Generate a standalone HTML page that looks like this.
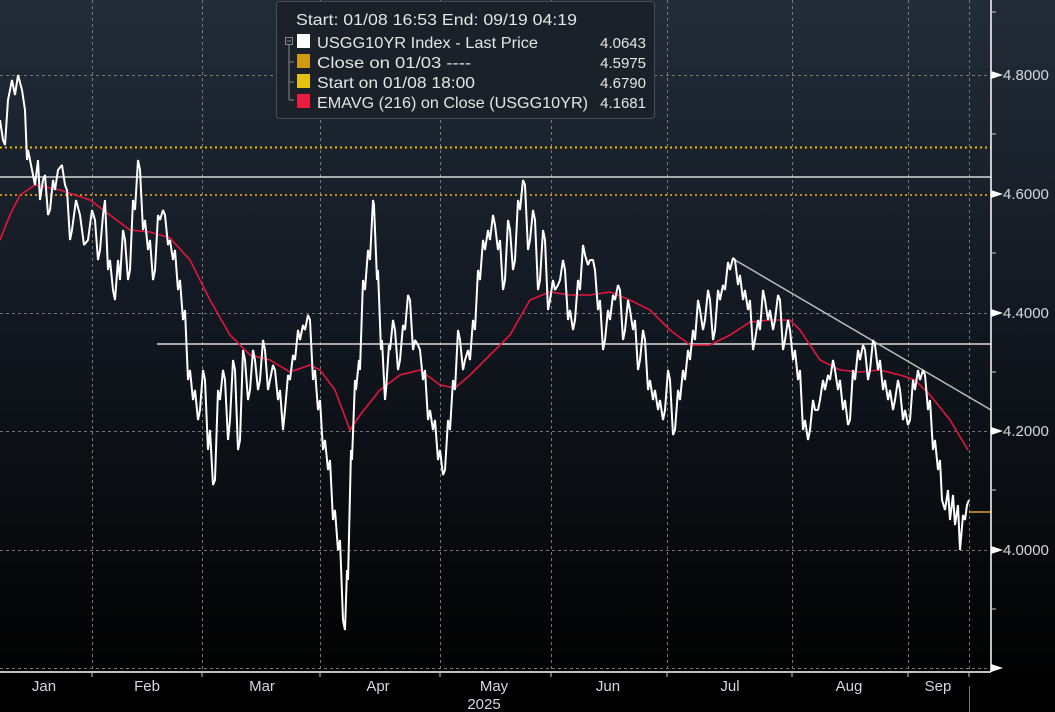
<!DOCTYPE html>
<html><head><meta charset="utf-8"><style>
html,body{margin:0;padding:0;background:#000;}
body{width:1055px;height:712px;overflow:hidden;font-family:"Liberation Sans",sans-serif;}
</style></head><body>
<svg width="1055" height="712" xmlns="http://www.w3.org/2000/svg" style="display:block">
<defs><linearGradient id="bg" x1="0" y1="0" x2="0" y2="1">
<stop offset="0" stop-color="#222c38"/><stop offset="0.45" stop-color="#121821"/><stop offset="0.85" stop-color="#050607"/><stop offset="1" stop-color="#000"/></linearGradient></defs>
<rect width="1055" height="712" fill="url(#bg)"/>
<rect y="672" width="1055" height="40" fill="#000"/>
<g stroke="#777" stroke-width="1" stroke-dasharray="3,3" fill="none">
<line x1="0" y1="75.5" x2="991" y2="75.5"/><line x1="0" y1="313.5" x2="991" y2="313.5"/>
<line x1="0" y1="431.5" x2="991" y2="431.5"/><line x1="0" y1="550.5" x2="991" y2="550.5"/><line x1="0" y1="668.5" x2="991" y2="668.5"/>
<line x1="92.5" y1="0" x2="92.5" y2="672"/><line x1="202.5" y1="0" x2="202.5" y2="672"/><line x1="320.5" y1="0" x2="320.5" y2="672"/>
<line x1="440.5" y1="0" x2="440.5" y2="672"/><line x1="551.5" y1="0" x2="551.5" y2="672"/><line x1="667.5" y1="0" x2="667.5" y2="672"/>
<line x1="792.5" y1="0" x2="792.5" y2="672"/><line x1="908.5" y1="0" x2="908.5" y2="672"/><line x1="969.5" y1="0" x2="969.5" y2="672"/>
</g>
<line x1="969.5" y1="686" x2="969.5" y2="712" stroke="#777"/>
<line x1="0" y1="147.5" x2="991" y2="147.5" stroke="#e8bc00" stroke-width="2" stroke-dasharray="2,3"/>
<line x1="0" y1="195" x2="991" y2="195" stroke="#c88d1c" stroke-width="2" stroke-dasharray="2,3"/>
<line x1="0" y1="177" x2="991" y2="177" stroke="#d8d8d8" stroke-width="1.5"/>
<line x1="157" y1="344" x2="991" y2="344" stroke="#d8d8d8" stroke-width="1.5"/>
<line x1="735" y1="260" x2="991" y2="410" stroke="#bbb" stroke-width="1.5"/>
<line x1="969" y1="512" x2="991" y2="512" stroke="#e0a020" stroke-width="1.5"/>
<polyline fill="none" stroke="#e4163a" stroke-width="1.6" points="0,240 10,215 20,195 35,185 60,190 90,200 110,215 130,230 150,232 170,238 190,260 210,300 230,335 250,355 270,360 290,372 310,365 320,370 335,390 350,430 360,415 380,390 400,375 420,370 440,385 455,388 470,375 490,355 510,335 530,300 550,292 570,295 590,295 610,292 630,300 650,310 670,330 690,345 710,345 730,335 750,322 770,320 790,320 800,330 820,360 840,370 860,372 880,370 900,375 915,380 930,395 950,420 968,450"/>
<polyline fill="none" stroke="#fff" stroke-width="2" stroke-linejoin="bevel" points="0,120 3,140 5,145 8,100 12,80 15,95 18,75 22,90 25,110 27,160 28,150 32,170 35,185 38,160 40,200 43,180 45,175 48,215 50,210 53,180 55,190 58,170 62,165 65,185 67,190 70,240 72,230 76,200 80,215 84,245 88,240 92,210 95,220 98,260 100,250 103,215 105,200 108,270 110,260 113,290 115,300 118,260 120,280 123,230 125,240 128,280 130,270 133,200 135,210 138,160 140,170 143,230 145,220 148,250 150,240 153,280 155,270 158,215 160,220 163,210 165,215 168,245 170,240 173,260 175,250 178,290 180,280 183,320 185,310 188,380 190,370 193,400 195,390 198,420 200,410 203,370 205,380 208,450 210,430 213,485 215,480 218,390 220,400 223,370 225,380 228,440 230,420 233,360 235,370 238,450 240,440 243,350 245,360 248,400 250,390 253,350 255,360 258,390 260,380 263,340 265,350 268,390 270,380 273,365 275,370 278,400 280,390 283,430 285,410 288,375 290,380 293,355 295,360 298,330 300,340 303,325 305,330 308,315 310,320 313,380 315,370 318,410 320,400 323,450 325,440 328,470 330,460 333,520 335,510 338,550 340,540 343,620 345,630 347,570 348,580 351,450 352,460 355,380 356,390 359,360 360,370 363,280 365,290 368,250 370,260 373,200 374,205 377,280 378,270 381,350 382,340 385,400 386,390 389,345 390,350 393,320 395,330 398,370 400,360 403,325 405,330 408,295 410,300 413,350 415,340 418,345 420,350 423,380 425,370 428,420 430,410 433,430 435,420 438,460 440,450 443,475 445,470 448,420 450,430 453,380 455,390 458,330 460,340 463,370 465,360 468,350 470,360 473,320 475,330 478,270 480,280 483,240 485,250 488,230 490,240 493,215 495,225 498,250 500,240 503,290 505,280 508,220 510,230 513,270 515,260 518,200 520,210 523,180 525,185 528,250 530,240 533,210 535,220 538,290 540,280 543,230 545,240 548,310 550,300 553,280 555,290 558,285 560,280 563,260 565,270 568,320 570,310 573,330 575,320 578,280 580,290 583,245 585,255 588,265 590,260 593,260 595,270 598,310 600,300 603,350 605,340 608,310 610,320 613,295 615,300 618,285 620,290 623,340 625,330 628,300 630,310 633,330 635,320 638,370 640,360 643,330 645,340 648,390 650,380 653,400 655,390 658,410 660,400 663,420 665,410 668,370 670,380 673,435 675,430 678,390 680,400 683,370 685,380 688,350 690,360 693,330 695,340 698,300 700,310 703,330 705,320 708,290 710,300 713,340 715,330 718,290 720,300 723,285 725,290 728,262 730,270 733,258 735,260 738,285 740,275 743,300 745,290 748,310 750,300 753,350 755,340 758,320 760,330 763,290 765,300 768,320 770,310 773,330 775,320 778,295 780,300 783,350 785,340 788,320 790,330 793,360 795,350 798,380 800,370 803,430 805,420 808,440 810,430 813,400 815,410 818,410 820,400 823,380 825,390 828,375 830,380 833,360 835,370 838,390 840,380 843,410 845,400 848,425 850,420 853,370 855,380 858,350 860,360 863,345 865,350 868,380 870,370 873,340 875,345 878,370 880,360 883,390 885,380 888,400 890,390 893,410 895,400 898,380 900,390 903,420 905,410 908,425 910,420 913,380 915,390 918,370 920,380 923,370 925,375 928,410 930,400 933,450 935,440 938,470 940,460 942,500 945,510 948,490 950,520 953,495 955,525 958,505 960,550 963,515 965,520 967,505 969,500"/>
<g stroke="#fff" stroke-width="1.5" fill="none"><line x1="991" y1="0" x2="991" y2="672"/><line x1="0" y1="672" x2="991" y2="672"/></g>
<g stroke="#ccc" stroke-width="1"><line x1="991" y1="12" x2="996" y2="12"/><line x1="991" y1="134" x2="996" y2="134"/><line x1="991" y1="253" x2="996" y2="253"/><line x1="991" y1="372" x2="996" y2="372"/><line x1="991" y1="490" x2="996" y2="490"/><line x1="991" y1="609" x2="996" y2="609"/>
<line x1="92" y1="672" x2="92" y2="677"/><line x1="202" y1="672" x2="202" y2="677"/><line x1="320" y1="672" x2="320" y2="677"/><line x1="440" y1="672" x2="440" y2="677"/><line x1="551" y1="672" x2="551" y2="677"/><line x1="667" y1="672" x2="667" y2="677"/><line x1="792" y1="672" x2="792" y2="677"/><line x1="908" y1="672" x2="908" y2="677"/><line x1="969" y1="672" x2="969" y2="677"/></g>
<g fill="#fff"><polygon points="991,71 991,79 1003,75"/><polygon points="991,190 991,198 1003,194"/><polygon points="991,309 991,317 1003,313"/><polygon points="991,427 991,435 1003,431"/><polygon points="991,546 991,554 1003,550"/><polygon points="991,664 991,672 1003,668"/></g>
<g fill="#d2d8de" font-size="15" font-family="Liberation Sans, sans-serif">
<text x="1003" y="80">4.8000</text><text x="1003" y="199">4.6000</text><text x="1003" y="318">4.4000</text><text x="1003" y="436">4.2000</text><text x="1003" y="555">4.0000</text>
<g text-anchor="middle"><text x="44" y="691">Jan</text><text x="147" y="691">Feb</text><text x="262" y="691">Mar</text><text x="378" y="691">Apr</text><text x="494" y="691">May</text><text x="608" y="691">Jun</text><text x="730" y="691">Jul</text><text x="849" y="691">Aug</text><text x="938" y="691">Sep</text><text x="484" y="709">2025</text></g>
</g>
<rect x="276.5" y="1.5" width="378" height="117" rx="3" fill="#1a2129" stroke="#4a4f55"/>
<g stroke="#888" fill="none" stroke-width="1"><rect x="285.5" y="37.5" width="7" height="7"/><line x1="287" y1="41" x2="291" y2="41"/><line x1="289" y1="45" x2="289" y2="100"/><line x1="289" y1="100" x2="294" y2="100"/><line x1="289" y1="62" x2="294" y2="62"/><line x1="289" y1="82" x2="294" y2="82"/></g>
<rect x="297" y="34" width="13" height="14" fill="#fff"/><rect x="297" y="54" width="13" height="14" fill="#cf9a10"/><rect x="297" y="74" width="13" height="14" fill="#e3c212"/><rect x="297" y="94" width="13" height="14" fill="#ec1c3e"/>
<g fill="#e4e6e8" font-size="16" font-family="Liberation Sans, sans-serif">
<text x="296" y="25" textLength="281" lengthAdjust="spacingAndGlyphs">Start: 01/08 16:53 End: 09/19 04:19</text>
<text x="317" y="48" textLength="221" lengthAdjust="spacingAndGlyphs">USGG10YR Index - Last Price</text>
<text x="317" y="68" textLength="154" lengthAdjust="spacingAndGlyphs">Close on 01/03 ----</text>
<text x="317" y="88" textLength="158" lengthAdjust="spacingAndGlyphs">Start on 01/08 18:00</text>
<text x="317" y="108" textLength="271" lengthAdjust="spacingAndGlyphs">EMAVG (216)  on Close (USGG10YR)</text>
<g text-anchor="end" font-size="15"><text x="646" y="48">4.0643</text><text x="646" y="68">4.5975</text><text x="646" y="88">4.6790</text><text x="646" y="108">4.1681</text></g>
</g>
</svg>
</body></html>
